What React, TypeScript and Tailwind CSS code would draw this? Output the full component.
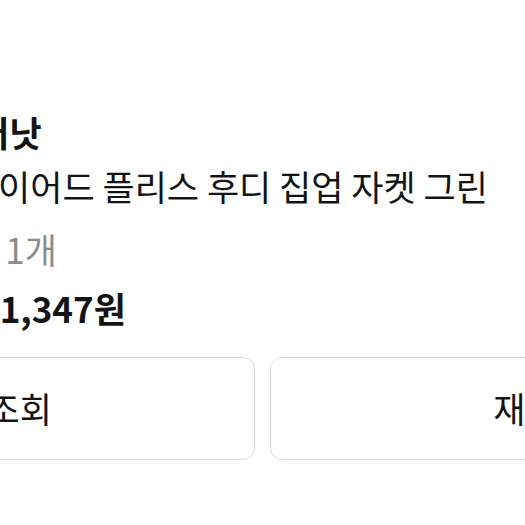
const font = { fontFamily: '"Noto Sans CJK KR", "Noto Sans", sans-serif' }

export default function App() {
  return (
    <div
      className="w-[525px] h-[525px] overflow-hidden bg-white text-[#141414]"
      style={font}
    >
      <div className="pt-[110px]">
        <div className="-ml-[55px] whitespace-nowrap text-[35px] font-bold leading-[44px]">
          커버낫
        </div>
        <div className="-ml-[2px] mt-[10px] whitespace-nowrap text-[35px] leading-[44px]">
          이어드 플리스 후디 집업 자켓 그린
        </div>
        <div className="-ml-[67px] mt-[19px] whitespace-nowrap text-[35px] leading-[44px] text-[#8c8c8c]">
          수량 1개
        </div>
        <div className="-ml-[21px] mt-[15px] whitespace-nowrap text-[35px] font-bold leading-[44px]">
          21,347원
        </div>
        <div className="-ml-[288px] mt-[27px] flex gap-[15px]">
          <button
            type="button"
            className="flex h-[103px] w-[543px] shrink-0 items-center justify-center rounded-[12px] border border-[#dcdcdc] pl-[8px] text-[35px]"
          >
            배송조회
          </button>
          <button
            type="button"
            className="flex h-[103px] w-[543px] shrink-0 items-center justify-center rounded-[12px] border border-[#dcdcdc] text-[35px]"
          >
            재구매
          </button>
        </div>
      </div>
    </div>
  )
}
